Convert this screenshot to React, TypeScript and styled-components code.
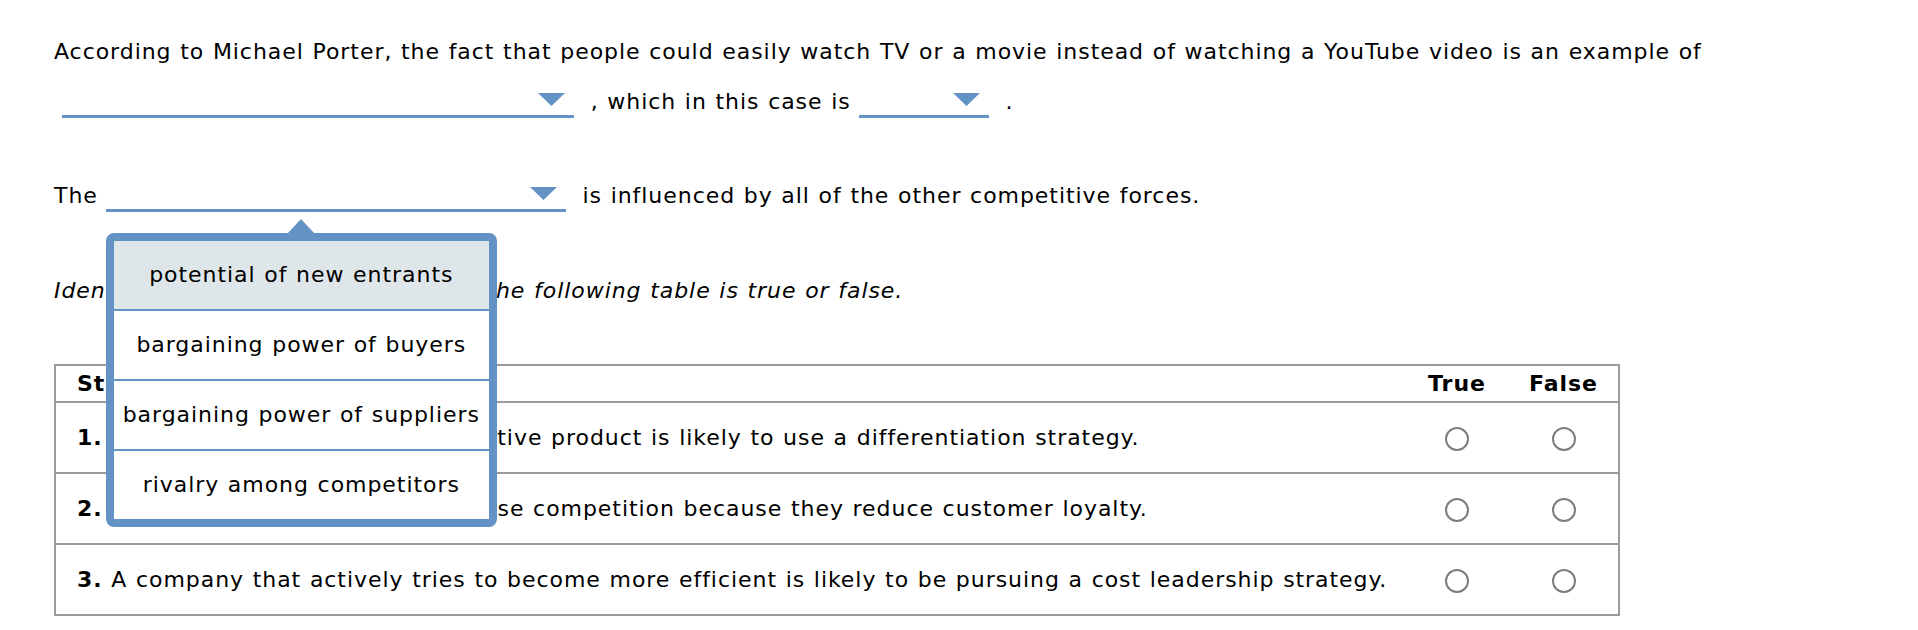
import React from 'react';
import styled, { createGlobalStyle } from 'styled-components';

const GlobalStyle = createGlobalStyle`
  body {
    margin: 0;
    background: #fff;
  }
`;

const options = [
  'potential of new entrants',
  'bargaining power of buyers',
  'bargaining power of suppliers',
  'rivalry among competitors',
];

const statements = [
  'A company that makes a distinctive product is likely to use a differentiation strategy.',
  'Many substitute products increase competition because they reduce customer loyalty.',
  'A company that actively tries to become more efficient is likely to be pursuing a cost leadership strategy.',
];

const Arrow = () => (
  <ArrowIcon width="27" height="13" viewBox="0 0 27 13">
    <polygon points="0,0 27,0 13.5,13" fill="#6393c4" />
  </ArrowIcon>
);

const App: React.FC = () => {
  return (
    <>
      <GlobalStyle />
      <Page>
        <Prompt $gap={0}>
          According to Michael Porter, the fact that people could easily watch TV or a movie instead of watching a
          YouTube video is an example of <Dropdown $width={512}><Arrow /></Dropdown> , which in this case
          is<Dropdown $width={130}><Arrow /></Dropdown> .
        </Prompt>

        <Prompt $gap={44}>
          The<Dropdown $width={460}>
            <Arrow />
            <Menu>
              {options.map((opt, i) => (
                <MenuItem key={opt} $active={i === 0}>{opt}</MenuItem>
              ))}
            </Menu>
          </Dropdown> is influenced by all of the other competitive forces.
        </Prompt>

        <Instruction $gap={45}>
          Identify whether each statement in the following table is true or false.
        </Instruction>

        <Table>
          <thead>
            <tr>
              <HeadCell>Statement</HeadCell>
              <ChoiceHead $w={104}>True</ChoiceHead>
              <ChoiceHead $w={109}>False</ChoiceHead>
            </tr>
          </thead>
          <tbody>
            {statements.map((s, i) => (
              <Row key={i} $last={i === statements.length - 1}>
                <TextCell><b>{i + 1}.</b> {s}</TextCell>
                <ChoiceCell><Radio /></ChoiceCell>
                <ChoiceCell><Radio /></ChoiceCell>
              </Row>
            ))}
          </tbody>
        </Table>
      </Page>
    </>
  );
};

export default App;

const Page = styled.div`
  padding: 27px 0 40px 54px;
  font-family: "DejaVu Sans", Verdana, sans-serif;
  font-size: 22px;
  letter-spacing: 0.95px;
  word-spacing: 0.75px;
  color: #000;
`;

const Prompt = styled.p<{ $gap: number }>`
  margin: ${(p) => p.$gap}px 0 0;
  line-height: 50px;
`;

const Instruction = styled(Prompt)`
  font-style: italic;
`;

const Dropdown = styled.span<{ $width: number }>`
  position: relative;
  display: inline-block;
  box-sizing: border-box;
  width: ${(p) => p.$width}px;
  height: 30px;
  margin: 0 8px;
  border-bottom: 3px solid #6393c4;
  vertical-align: -9px;
`;

const ArrowIcon = styled.svg`
  position: absolute;
  right: 9px;
  bottom: 9px;
`;

const Menu = styled.ul`
  position: absolute;
  left: 0;
  top: calc(100% + 24px);
  z-index: 10;
  box-sizing: border-box;
  width: 391px;
  margin: 0;
  padding: 0;
  list-style: none;
  background: #fff;
  border: 8px solid #6393c4;
  border-radius: 8px;

  &::before {
    content: '';
    position: absolute;
    top: -22px;
    left: 173px;
    border-left: 14px solid transparent;
    border-right: 14px solid transparent;
    border-bottom: 15px solid #6393c4;
  }
`;

const MenuItem = styled.li<{ $active: boolean }>`
  display: flex;
  align-items: center;
  justify-content: center;
  height: 68px;
  white-space: nowrap;
  line-height: 1;
  background: ${(p) => (p.$active ? '#dfe6e9' : '#fff')};

  & + & {
    border-top: 2px solid #6393c4;
  }
`;

const Table = styled.table`
  box-sizing: border-box;
  width: 1566px;
  margin-top: 48px;
  border: 2px solid #9b9b9b;
  border-spacing: 0;
  border-collapse: separate;
`;

const HeadCell = styled.th`
  height: 35px;
  padding: 0 0 0 21px;
  text-align: left;
  font-weight: bold;
  border-bottom: 2px solid #9b9b9b;
`;

const ChoiceHead = styled.th<{ $w: number }>`
  width: ${(p) => p.$w}px;
  padding: 0;
  text-align: center;
  font-weight: bold;
  border-bottom: 2px solid #9b9b9b;
`;

const Row = styled.tr<{ $last: boolean }>`
  & > td {
    height: 69px;
    border-bottom: ${(p) => (p.$last ? 'none' : '2px solid #9b9b9b')};
  }
`;

const TextCell = styled.td`
  padding: 0 0 0 21px;
  vertical-align: middle;
`;

const ChoiceCell = styled.td`
  padding: 0;
  text-align: center;
  vertical-align: middle;
`;

const Radio = styled.span`
  display: inline-block;
  box-sizing: border-box;
  width: 24px;
  height: 24px;
  border: 2px solid #7d7d7d;
  border-radius: 50%;
  background: #fff;
  vertical-align: middle;
`;
